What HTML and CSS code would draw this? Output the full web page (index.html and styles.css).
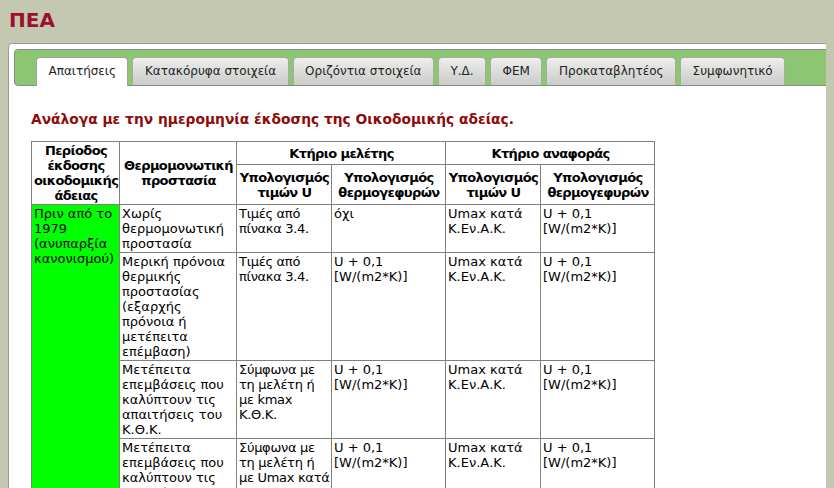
FILE: index.html
```html
<!DOCTYPE html>
<html lang="el">
<head>
<meta charset="utf-8">
<title>ΠΕΑ</title>
<link rel="stylesheet" href="styles.css">
</head>
<body>
<h1 class="title">ΠΕΑ</h1>
<div class="panel">
  <ul class="tabs">
    <li class="tab active">Απαιτήσεις</li>
    <li class="tab">Κατακόρυφα στοιχεία</li>
    <li class="tab">Οριζόντια στοιχεία</li>
    <li class="tab">Υ.Δ.</li>
    <li class="tab">ΦΕΜ</li>
    <li class="tab">Προκαταβλητέος</li>
    <li class="tab">Συμφωνητικό</li>
  </ul>
  <div class="content">
    <h2 class="lead">Ανάλογα με την ημερομηνία έκδοσης της Οικοδομικής αδείας.</h2>
    <table class="req">
      <colgroup>
        <col class="c1"><col class="c2"><col class="c3"><col class="c4"><col class="c5"><col class="c6">
      </colgroup>
      <thead>
        <tr class="hr1">
          <th rowspan="2">Περίοδος έκδοσης οικοδομικής άδειας</th>
          <th rowspan="2">Θερμομονωτική προστασία</th>
          <th colspan="2">Κτήριο μελέτης</th>
          <th colspan="2">Κτήριο αναφοράς</th>
        </tr>
        <tr class="hr2">
          <th>Υπολογισμός τιμών U</th>
          <th>Υπολογισμός θερμογεφυρών</th>
          <th>Υπολογισμός τιμών U</th>
          <th>Υπολογισμός θερμογεφυρών</th>
        </tr>
      </thead>
      <tbody>
        <tr>
          <td rowspan="4" class="period">Πριν από το 1979 (ανυπαρξία κανονισμού)</td>
          <td>Χωρίς θερμομονωτική προστασία</td>
          <td class="tight">Τιμές από πίνακα 3.4.</td>
          <td>όχι</td>
          <td>Umax κατά Κ.Εν.Α.Κ.</td>
          <td>U + 0,1 [W/(m2*K)]</td>
        </tr>
        <tr>
          <td>Μερική πρόνοια θερμικής προστασίας (εξαρχής πρόνοια ή μετέπειτα επέμβαση)</td>
          <td class="tight">Τιμές από πίνακα 3.4.</td>
          <td>U + 0,1 [W/(m2*K)]</td>
          <td>Umax κατά Κ.Εν.Α.Κ.</td>
          <td>U + 0,1 [W/(m2*K)]</td>
        </tr>
        <tr>
          <td>Μετέπειτα επεμβάσεις που καλύπτουν τις απαιτήσεις του Κ.Θ.Κ.</td>
          <td class="tight">Σύμφωνα με τη μελέτη ή με kmax Κ.Θ.Κ.</td>
          <td>U + 0,1 [W/(m2*K)]</td>
          <td>Umax κατά Κ.Εν.Α.Κ.</td>
          <td>U + 0,1 [W/(m2*K)]</td>
        </tr>
        <tr>
          <td>Μετέπειτα επεμβάσεις που καλύπτουν τις απαιτήσεις του Κ.Εν.Α.Κ.</td>
          <td class="tight">Σύμφωνα με τη μελέτη ή με Umax κατά Κ.Εν.Α.Κ.</td>
          <td>U + 0,1 [W/(m2*K)]</td>
          <td>Umax κατά Κ.Εν.Α.Κ.</td>
          <td>U + 0,1 [W/(m2*K)]</td>
        </tr>
      </tbody>
    </table>
  </div>
</div>
</body>
</html>
```

FILE: styles.css
```css
html {
  overflow: hidden;
}
body {
  margin: 8px;
  background: #c4c8b0;
  font-family: "DejaVu Sans", Verdana, sans-serif;
  color: #000;
}
.title {
  margin: 0 0 0 1px;
  font-size: 20px;
  line-height: 24px;
  font-weight: bold;
  color: #9b1030;
}
.panel {
  margin: 11px -60px 0 0;
  background: #fff;
  border: 1px solid #9a9a9a;
  border-radius: 4px;
  padding: 5px;
  min-height: 600px;
}
.tabs {
  list-style: none;
  margin: 0;
  padding: 7px 0 0 21px;
  display: flex;
  gap: 4px;
  background: #8cc672;
  border: 1px solid #8a8a8a;
  border-radius: 4px;
}
.tab {
  padding: 0 11.5px;
  height: 27px;
  line-height: 27px;
  font-size: 12px;
  color: #222;
  border: 1px solid #a8aaa6;
  border-bottom: none;
  border-radius: 4px 4px 0 0;
  background: linear-gradient(#eeeeee, #c9ccc7);
}
.tab.active {
  background: #fff;
  margin-bottom: -1px;
  height: 28px;
  border-color: #a0a0a0;
}
.content {
  padding: 24px 0 0 17px;
}
.lead {
  margin: 0 0 13px;
  font-size: 13.8px;
  line-height: 18px;
  font-weight: bold;
  color: #8e0b0b;
}
.req {
  border-collapse: collapse;
  table-layout: fixed;
  width: 623px;
  font-size: 13px;
  line-height: 15px;
}
.c1 { width: 88px; }
.c2 { width: 117px; }
.c3 { width: 95px; }
.c4 { width: 114px; }
.c5 { width: 95px; }
.c6 { width: 114px; }
.req th,
.req td {
  border: 1px solid #808080;
  padding: 1px 1px 1px 2px;
}
.req th {
  font-weight: bold;
  text-align: center;
  vertical-align: middle;
  letter-spacing: -0.6px;
}
.req td {
  text-align: left;
  vertical-align: top;
}
.req td.tight {
  letter-spacing: -0.3px;
}
.hr1 { height: 23px; }
.hr2 { height: 40px; }
.req td.period {
  background: #00ff00;
}
```
